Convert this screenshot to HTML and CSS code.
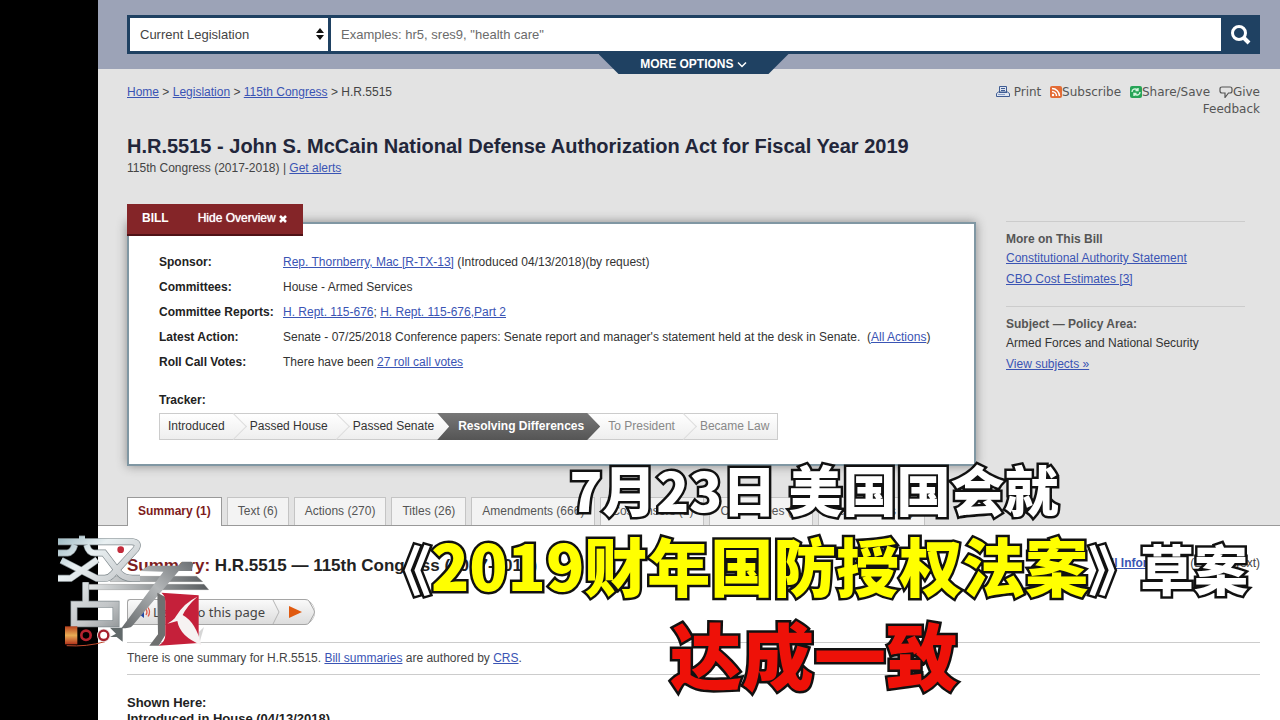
FILE: index.html
```
<!DOCTYPE html>
<html lang="en">
<head>
<meta charset="utf-8">
<title>H.R.5515 - 115th Congress (2017-2018)</title>
<link rel="stylesheet" href="styles.css">
</head>
<body>
<div class="frame">
 <div class="page">
  <header class="top">
   <form class="search">
    <div class="pick">
     <select aria-label="Collection"><option>Current Legislation</option></select>
     <svg width="8" height="12" viewBox="0 0 8 12"><path d="M4 0L8 5H0zM4 12L0 7H8z" fill="#111"/></svg>
    </div>
    <input type="text" aria-label="Search" placeholder='Examples: hr5, sres9, "health care"'>
    <button type="button" class="go" aria-label="Go">
     <svg width="20" height="20" viewBox="0 0 20 20" fill="none" stroke="#fff"><circle cx="8" cy="8" r="6.500" stroke-width="3"/><path d="M12.500 12.500L18 18" stroke-width="4"/></svg>
    </button>
   </form>
   <button type="button" class="more">MORE OPTIONS <svg width="10" height="8" viewBox="0 0 10 8"><path d="M1 1.500L5 5.500L9 1.500" fill="none" stroke="#fff" stroke-width="1.500"/></svg></button>
  </header>

  <div class="upper">
   <div class="crumbs">
    <nav><a href="#">Home</a> &gt; <a href="#">Legislation</a> &gt; <a href="#">115th Congress</a> &gt; H.R.5515</nav>
    <div class="tools">
     <a href="#"><svg width="14" height="12" viewBox="0 0 14 12"><path d="M3.500 6V.5h7V6M.5 10.500v-3l2-1.500h9l2 1.500v3z" fill="#dfe5f0" stroke="#3f5c93"/><path d="M5 2.500h4M5 4.500h4M3 6.500h8" stroke="#3f5c93"/><path d="M2 8.500h7" stroke="#8aa0c8"/></svg> Print</a>
     <a href="#"><svg width="12" height="12" viewBox="0 0 12 12"><rect width="12" height="12" rx="2" fill="#e36b35"/><g fill="none" stroke="#fff" stroke-width="1.500"><path d="M2 5.500a4.500 4.500 0 0 1 4.500 4.500M2 2.500a7.500 7.500 0 0 1 7.500 7.500"/></g><circle cx="3" cy="9" r="1.200" fill="#fff"/></svg>Subscribe</a>
     <a href="#"><svg width="12" height="12" viewBox="0 0 12 12"><rect width="12" height="12" rx="2" fill="#27a457"/><path d="M2 6C2 3 5 2 8 4M10 6c0 3-3 4-6 2M8 2v2.500H5.500M4 10V7.500h2.500" fill="none" stroke="#d5f5df" stroke-width="1.400"/></svg>Share/Save</a>
     <a href="#"><svg width="14" height="12" viewBox="0 0 14 12"><path d="M3 1h8q2 0 2 2v2q0 2-2 2H9.500L6 11.500V7H3q-2 0-2-2V3q0-2 2-2z" fill="none" stroke="#555" stroke-width="1.200"/></svg>Give Feedback</a>
    </div>
   </div>
   <h1>H.R.5515 - John S. McCain National Defense Authorization Act for Fiscal Year 2019</h1>
   <p class="sub">115th Congress (2017-2018) | <a href="#">Get alerts</a></p>

   <div class="cols">
    <main class="overview">
     <div class="flag"><b>BILL</b><button type="button">Hide Overview <svg width="8" height="8" viewBox="0 0 8 8"><path d="M1 1L7 7M7 1L1 7" stroke="#fff" stroke-width="2.500"/></svg></button></div>
     <div class="card">
      <table>
       <tr><th>Sponsor:</th><td><a href="#">Rep. Thornberry, Mac [R-TX-13]</a> (Introduced 04/13/2018)(by request)</td></tr>
       <tr><th>Committees:</th><td>House - Armed Services</td></tr>
       <tr><th>Committee Reports:</th><td><a href="#">H. Rept. 115-676</a>; <a href="#">H. Rept. 115-676,Part 2</a></td></tr>
       <tr><th>Latest Action:</th><td>Senate - 07/25/2018 Conference papers: Senate report and manager's statement held at the desk in Senate. &nbsp;(<a href="#">All Actions</a>)</td></tr>
       <tr><th>Roll Call Votes:</th><td>There have been <a href="#">27 roll call votes</a></td></tr>
      </table>
      <h2>Tracker:</h2>
      <ol class="tracker">
       <li>Introduced</li>
       <li>Passed House</li>
       <li>Passed Senate</li>
       <li class="now">Resolving Differences</li>
       <li class="todo">To President</li>
       <li class="todo">Became Law</li>
      </ol>
     </div>
    </main>
    <aside>
     <section>
      <h2>More on This Bill</h2>
      <p><a href="#">Constitutional Authority Statement</a></p>
      <p><a href="#">CBO Cost Estimates [3]</a></p>
     </section>
     <section>
      <h2>Subject — Policy Area:</h2>
      <p>Armed Forces and National Security</p>
      <p><a href="#">View subjects »</a></p>
     </section>
    </aside>
   </div>

   <nav class="tabs">
    <a href="#" class="on">Summary (1)</a>
    <a href="#">Text (6)</a>
    <a href="#">Actions (270)</a>
    <a href="#">Titles (26)</a>
    <a href="#">Amendments (666)</a>
    <a href="#">Cosponsors (1)</a>
    <a href="#">Committees (6)</a>
    <a href="#">Related Bills (5)</a>
   </nav>
  </div>

  <div class="lower">
   <div class="head">
    <h2><span>Summary:</span> H.R.5515 — 115th Congress (2017-2018)</h2>
    <div><a href="#"><b>All Information</b></a> (Except Text)</div>
   </div>
   <button type="button" class="listen">
    <svg width="16" height="14" viewBox="0 0 16 14"><path d="M0 5h3l5-4v12L3 9H0z" fill="#2347a5"/><path d="M10 4q2 3 0 6M12 2.500q3 4.500 0 9" fill="none" stroke="#e05a4a" stroke-width="1.300"/></svg>
    <span>Listen to this page</span>
    <svg class="cap" width="44" height="26" viewBox="0 0 44 26"><defs><linearGradient id="cg" x2="0" y2="1"><stop stop-color="#fafafa"/><stop offset="1" stop-color="#dcdcdc"/></linearGradient></defs><path d="M0 .5H34Q37 .5 38 2L43 11Q44 13 43 15L38 24Q37 25.500 34 25.500H0" fill="url(#cg)" stroke="#a5a5a5"/><path d="M2 1L8 13L2 25" fill="none" stroke="#b5b5b5"/><path d="M18 7L31 13L18 19z" fill="#e05a10"/></svg>
   </button>
   <p class="note">There is one summary for H.R.5515. <a href="#">Bill summaries</a> are authored by <a href="#">CRS</a>.</p>
   <h3>Shown Here:<br>Introduced in House (04/13/2018)</h3>
  </div>
 </div>

 <svg class="logo" width="170" height="130" viewBox="0 0 510 390" aria-hidden="true">
  <defs>
   <linearGradient id="steel" gradientUnits="userSpaceOnUse" x1="20" y1="40" x2="230" y2="300"><stop stop-color="#9dbac3"/><stop offset=".3" stop-color="#e9f0f2"/><stop offset=".55" stop-color="#d3d7d9"/><stop offset=".75" stop-color="#c3c6c8"/><stop offset="1" stop-color="#8f9395"/></linearGradient>
   <linearGradient id="dark" x1="1" y1="0" x2="0" y2="1"><stop stop-color="#6b6f72"/><stop offset=".45" stop-color="#b4b7b9"/><stop offset="1" stop-color="#64686a"/></linearGradient>
   <linearGradient id="beam"><stop stop-color="#e4e7e8"/><stop offset="1" stop-color="#585c5f"/></linearGradient>
   <linearGradient id="gold" x2="0" y2="1"><stop stop-color="#b8421e"/><stop offset=".5" stop-color="#e9ad55"/><stop offset="1" stop-color="#b3341c"/></linearGradient>
   <g id="bars"><path d="M87 42h18M24 50H246Q270 52 258 72L188 148Q178 160 164 160H140L34 106M24 160H62L142 104M24 84H52Q68 82 74 60M110 60Q116 84 134 84H162L206 142Q220 160 248 160H270M107 172V238"/><path d="M72 238H198V296H72z"/></g>
  </defs>
  <path d="M190 154H440L458 170H180zM112 178H462L476 194H112z" fill="url(#beam)" stroke="#777" stroke-width="1"/>
  <use href="#bars" fill="none" stroke="#7f898d" stroke-width="21"/>
  <use href="#bars" fill="none" stroke="url(#steel)" stroke-width="17"/>
  <circle cx="212" cy="74" r="10" fill="#c32b3b"/>
  <path d="M270 138L296 122H384L396 110H424L430 116L424 138H386L246 304Q240 310 214 310L340 140z" fill="url(#dark)"/>
  <path d="M45 304H82V358H45z" fill="url(#gold)"/>
  <path d="M50 362Q110 366 165 350" fill="none" stroke="#c04a2d" stroke-width="3"/>
  <circle cx="108" cy="331" r="14" fill="none" stroke="#b5232f" stroke-width="8"/>
  <circle cx="161" cy="331" r="20" fill="#e8dede"/><circle cx="161" cy="331" r="14" fill="#fff" stroke="#a51f2d" stroke-width="7"/>
  <path d="M180 308H218V350L200 336H180L198 326z" fill="#626a6b"/>
  <path d="M322 203L346 216V330L326 362H298L324 328z" fill="#6f7070"/>
  <path d="M334 203L446 211V354L326 362Q346 350 346 330V230Q346 212 334 203z" fill="#c5203a"/>
  <path d="M442 215Q400 235 378 274Q372 286 352 296L382 288Q390 335 454 360Q438 292 398 270Q410 244 442 215z" fill="#f6f2f2"/>
  <path d="M446 322L462 306L450 348z" fill="#777" opacity=".3"/>
 </svg>

 <div class="caption" lang="zh-CN">
  <p>7月23日 美国国会就</p>
  <p class="act"><span class="half">《</span><em>2019财年国防授权法案</em><span class="half">》</span>&nbsp; 草案</p>
  <p class="red">达成一致</p>
 </div>
</div>
</body>
</html>
```
FILE: styles.css
```
* {
 box-sizing: border-box;
}
body {
 margin: 0;
 background: #000;
 font: 12px/16px "Liberation Sans", Arial, sans-serif;
 color: #444;
}
h1, h2, h3, p, ol {
 margin: 0;
 padding: 0;
}
a {
 color: #3a54b4;
}
button, input, select {
 font: inherit;
 border: 0;
 margin: 0;
}
.frame {
 position: relative;
 height: 100vh;
 overflow: hidden;
}
.page {
 margin-left: 98px;
 background: #fff;
}
.top {
 height: 69px;
 padding: 15px 20px 0 29px;
 background: #9ca3b7;
}
.search {
 display: flex;
 height: 39px;
 padding: 3px 0 3px 3px;
 background: #1f4162;
 font-size: 13px;
}
.pick {
 position: relative;
 width: 198px;
 margin-right: 3px;
}
.pick select {
 appearance: none;
 width: 100%;
 height: 100%;
 padding: 0 10px;
 background: #fff;
 color: #444;
}
.pick svg {
 position: absolute;
 right: 4px;
 top: 10px;
}
.search input {
 flex: 1;
 padding: 0 10px;
 background: #fff;
}
.search input::placeholder {
 color: #6b6b6b;
}
.go {
 width: 39px;
 padding: 0;
 background: none;
}
.go svg, .more svg, .flag svg {
 vertical-align: middle;
}
.more {
 display: block;
 width: 190px;
 height: 20px;
 margin: 0 auto;
 padding: 0;
 background: #1f4162;
 clip-path: polygon(0 0, 100% 0, 170px 100%, 20px 100%);
 color: #fff;
 font-weight: bold;
}
.upper {
 padding: 15px 20px 0 29px;
 background: #e3e3e3;
}
.crumbs {
 display: flex;
 justify-content: space-between;
}
.tools {
 width: 280px;
 text-align: right;
 font: 12px/17px "DejaVu Sans", sans-serif;
}
.tools a {
 margin-left: 5px;
 color: #555;
 text-decoration: none;
}
.tools svg {
 vertical-align: -2px;
}
h1 {
 margin-top: 16px;
 font-size: 20px;
 line-height: 24px;
 color: #22263a;
}
.sub {
 margin-top: 2px;
}
.cols {
 display: flex;
 gap: 30px;
 padding: 28px 15px 31px 0;
}
.overview {
 flex: 1;
}
.flag {
 position: relative;
 display: flex;
 gap: 29px;
 width: 176px;
 height: 32px;
 margin-bottom: -14px;
 padding: 6px 15px;
 background: #842528;
 border-bottom: 2px solid #4f1216;
 color: #fff;
}
.flag button {
 height: 16px;
 padding: 0;
 background: none;
 color: #fff;
 white-space: nowrap;
 text-shadow: 0 0 1px #fff;
}
.card {
 padding: 30px 30px 24px;
 background: #fff;
 border: 2px solid #8097a3;
 box-shadow: 0 0 10px #888;
 color: #333;
}
.card table {
 border-collapse: collapse;
}
.card th, .card td {
 padding: 0 0 9px;
 text-align: left;
}
.card th {
 width: 124px;
}
.card h2, .card th {
 font-size: 12px;
 color: #222;
}
.card h2 {
 margin: 13px 0 5px;
}
.tracker {
 display: inline-flex;
 height: 27px;
 border: 1px solid #ccc;
 background: linear-gradient(#fff, #eee);
 list-style: none;
 line-height: 24px;
}
.tracker li {
 position: relative;
 padding: 0 8px 0 17px;
}
.tracker li:first-child {
 padding-left: 8px;
}
.tracker li + li::before {
 content: "";
 position: absolute;
 left: -9px;
 top: 3px;
 width: 18px;
 height: 18px;
 border: solid #ddd;
 border-width: 1px 1px 0 0;
 transform: rotate(45deg);
}
.tracker .now {
 margin: -1px 0 -1px -5px;
 padding: 1px 16px 0 21px;
 background: linear-gradient(#777, #555);
 clip-path: polygon(0 0, 150px 0, 100% 50%, 150px 100%, 0 100%, 12px 50%);
 color: #fff;
 font-weight: bold;
}
.tracker .now::before, .tracker .now + li::before {
 display: none;
}
.tracker .now + li {
 padding-left: 8px;
}
.tracker .todo {
 color: #888;
}
aside {
 width: 239px;
 margin-top: 17px;
}
aside section {
 padding: 9px 0 17px;
 border-top: 1px solid #ccc;
}
aside h2 {
 font-size: 12px;
 color: #555;
}
aside p {
 padding: 3px 0 2px;
 color: #333;
}
.tabs {
 display: flex;
 gap: 5px;
}
.tabs a {
 padding: 5px 10px 6px;
 border: 1px solid #c4c4c4;
 border-bottom: 0;
 background: #f3f3f3;
 color: #555;
 text-decoration: none;
 white-space: nowrap;
}
.tabs .on {
 margin-bottom: -1px;
 border-color: #999;
 background: #fff;
 color: #7d1c20;
 font-weight: bold;
}
.lower {
 padding: 29px 20px 0 29px;
 border-top: 1px solid #999;
}
.head {
 display: flex;
 justify-content: space-between;
}
.head h2 {
 font-size: 17px;
 line-height: 22px;
 color: #222;
}
.head span {
 color: #7d1c20;
}
.listen {
 display: flex;
 align-items: center;
 height: 26px;
 margin-top: 22px;
 padding: 0;
 background: linear-gradient(#fafafa, #dcdcdc);
 border: solid #a5a5a5;
 border-width: 1px 0 1px 1px;
 border-radius: 4px 16px 16px 4px;
 color: #444;
 font: 13px/16px "Noto Sans", sans-serif;
}
.listen svg {
 margin: 0 1px 0 8px;
}
.listen .cap {
 margin: 0 0 0 6px;
}
.note {
 margin-top: 17px;
 padding: 7px 0 8px;
 border: solid #ccc;
 border-width: 1px 0;
}
h3 {
 margin-top: 20px;
 font-size: 13px;
 line-height: 16px;
 color: #222;
}
.logo {
 position: absolute;
 left: 50px;
 top: 525px;
}
.caption {
 position: absolute;
 left: 348px;
 right: 0;
 top: 454px;
 text-align: center;
 white-space: nowrap;
 color: #fff;
 font: 900 54px/70px "Noto Sans CJK SC", sans-serif;
 -webkit-text-stroke: 5px #111;
 paint-order: stroke fill;
}
.caption p + p {
 margin-top: 5px;
}
.caption em {
 color: #ff0;
 font-size: 63px;
 font-style: normal;
}
.caption .act {
 padding-left: 24px;
}
.half {
 font-feature-settings: "halt";
}
.caption .red {
 color: #ee1108;
 font-size: 72px;
 line-height: 90px;
}
```
